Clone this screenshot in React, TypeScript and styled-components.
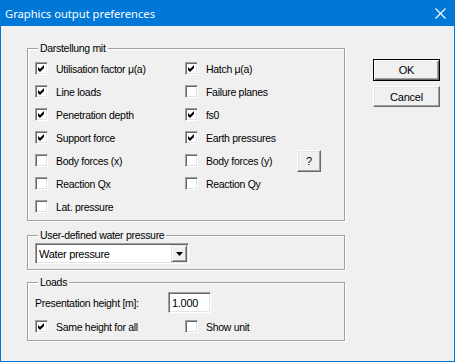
import React from "react";
import styled, { createGlobalStyle } from "styled-components";

const GlobalStyle = createGlobalStyle`
  html, body {
    margin: 0;
    padding: 0;
    background: #f0f0f0;
  }
  body {
    font-family: "Liberation Sans", Arial, sans-serif;
    font-size: 10.5px;
    letter-spacing: -0.3px;
    color: #000;
  }
`;

const Window = styled.div`
  width: 455px;
  height: 362px;
  box-sizing: border-box;
  border: 1px solid #0078d7;
  border-top: none;
  background: #f0f0f0;
  display: flex;
  flex-direction: column;
`;

const TitleBar = styled.div`
  height: 26px;
  margin: 0 -1px;
  background: #0078d7;
  color: #fff;
  display: flex;
  align-items: center;
  padding-left: 5px;
  font-family: "Noto Sans", "Liberation Sans", sans-serif;
  font-size: 11.2px;
  letter-spacing: 0;
`;

const Title = styled.div`
  flex: 1;
`;

const CloseBox = styled.div`
  width: 30px;
  height: 26px;
  display: flex;
  align-items: center;
  justify-content: center;
`;

const Body = styled.div`
  display: flex;
  padding: 22px 0 0 26px;
`;

const LeftColumn = styled.div`
  width: 318px;
  display: flex;
  flex-direction: column;
`;

const RightColumn = styled.div`
  display: flex;
  flex-direction: column;
  gap: 5px;
  padding: 11px 0 0 28px;
`;

const GroupBox = styled.div<{ $pad: string; $mt?: number }>`
  position: relative;
  box-sizing: border-box;
  border: 1px solid #a0a0a0;
  box-shadow: inset 1px 1px 0 #fff, 1px 1px 0 #fff;
  padding: ${p => p.$pad};
  margin-top: ${p => p.$mt ?? 0}px;
`;

const Legend = styled.span`
  position: absolute;
  top: -7px;
  left: 10px;
  padding: 0 2px;
  line-height: 13px;
  background: #f0f0f0;
`;

const CheckGrid = styled.div`
  display: grid;
  grid-template-columns: 150px 112px auto;
  grid-auto-rows: 23px;
  align-items: center;
`;

const Row = styled.label`
  display: flex;
  align-items: center;
  gap: 8px;
  white-space: nowrap;
`;

const Box = styled.span`
  position: relative;
  display: inline-block;
  flex: none;
  width: 13px;
  height: 13px;
  box-sizing: border-box;
  background: #fff;
  border: 1px solid;
  border-color: #a0a0a0 #fff #fff #a0a0a0;
  box-shadow: inset 1px 1px 0 #696969, inset -1px -1px 0 #e3e3e3;
  svg {
    position: absolute;
    left: -1px;
    top: -1px;
  }
`;

const Button = styled.button<{ $default?: boolean; $w: number; $h: number }>`
  width: ${p => p.$w}px;
  height: ${p => p.$h}px;
  padding: 0;
  box-sizing: border-box;
  background: #f0f0f0;
  font-family: "Liberation Sans", Arial, sans-serif;
  font-size: 11px;
  letter-spacing: -0.2px;
  color: #000;
  border: 1px solid;
  border-color: ${p => (p.$default ? "#000" : "#fff #696969 #696969 #fff")};
  box-shadow: ${p =>
    p.$default
      ? "inset 1px 1px 0 #fff, inset -1px -1px 0 #696969, inset -2px -2px 0 #a0a0a0"
      : "inset -1px -1px 0 #a0a0a0, inset 1px 1px 0 #e3e3e3"};
`;

const Sunken = styled.div<{ $w: number }>`
  width: ${p => p.$w}px;
  height: 21px;
  box-sizing: border-box;
  background: #fff;
  border: 1px solid;
  border-color: #a0a0a0 #fff #fff #a0a0a0;
  box-shadow: inset 1px 1px 0 #696969, inset -1px -1px 0 #e3e3e3;
  display: flex;
  align-items: center;
  padding: 0 1px 0 3px;
  font-size: 11px;
`;

const SelectText = styled.span`
  flex: 1;
`;

const ArrowButton = styled.span`
  width: 16px;
  height: 17px;
  box-sizing: border-box;
  background: #f0f0f0;
  border: 1px solid;
  border-color: #e3e3e3 #696969 #696969 #e3e3e3;
  box-shadow: inset 1px 1px 0 #fff, inset -1px -1px 0 #a0a0a0;
  display: flex;
  align-items: center;
  justify-content: center;
`;

const LoadsRow = styled.div`
  display: flex;
  align-items: center;
`;

const FieldLabel = styled.span`
  width: 133px;
`;

const LoadsChecks = styled.div`
  display: grid;
  grid-template-columns: 150px auto;
  margin-top: 7px;
`;

const Check = ({ checked }: { checked?: boolean }) => (
  <Box>
    {checked && (
      <svg width="13" height="13" viewBox="0 0 13 13">
        <polygon points="3,5 5,7 9,3 9,6 5,10 3,8" fill="#000" />
      </svg>
    )}
  </Box>
);

const options: [string, boolean, string, boolean][] = [
  ["Utilisation factor \u03bc(a)", true, "Hatch \u03bc(a)", true],
  ["Line loads", true, "Failure planes", false],
  ["Penetration depth", true, "fs0", true],
  ["Support force", true, "Earth pressures", true],
  ["Body forces (x)", false, "Body forces (y)", false],
  ["Reaction Qx", false, "Reaction Qy", false],
];

export default function App() {
  return (
    <>
      <GlobalStyle />
      <Window>
        <TitleBar>
          <Title>Graphics output preferences</Title>
          <CloseBox>
            <svg width="11" height="11" viewBox="0 0 11 11">
              <path d="M0.5 0.5 L10.5 10.5 M10.5 0.5 L0.5 10.5" stroke="#fff" strokeWidth="1.1" />
            </svg>
          </CloseBox>
        </TitleBar>
        <Body>
          <LeftColumn>
            <GroupBox $pad="8px 0 2px 7px">
              <Legend>Darstellung mit</Legend>
              <CheckGrid>
                {options.map(([a, ca, b, cb], i) => (
                  <React.Fragment key={a}>
                    <Row>
                      <Check checked={ca} />
                      {a}
                    </Row>
                    <Row>
                      <Check checked={cb} />
                      {b}
                    </Row>
                    <div>
                      {i === 4 && (
                        <Button $w={24} $h={22}>
                          ?
                        </Button>
                      )}
                    </div>
                  </React.Fragment>
                ))}
                <Row>
                  <Check />
                  Lat. pressure
                </Row>
              </CheckGrid>
            </GroupBox>

            <GroupBox $pad="7px 0 5px 7px" $mt={14}>
              <Legend>User-defined water pressure</Legend>
              <Sunken $w={154}>
                <SelectText>Water pressure</SelectText>
                <ArrowButton>
                  <svg width="7" height="4" viewBox="0 0 7 4">
                    <polygon points="0,0 7,0 3.5,4" fill="#000" />
                  </svg>
                </ArrowButton>
              </Sunken>
            </GroupBox>

            <GroupBox $pad="9px 0 7px 7px" $mt={12}>
              <Legend>Loads</Legend>
              <LoadsRow>
                <FieldLabel>Presentation height [m]:</FieldLabel>
                <Sunken $w={43}>1.000</Sunken>
              </LoadsRow>
              <LoadsChecks>
                <Row>
                  <Check checked />
                  Same height for all
                </Row>
                <Row>
                  <Check />
                  Show unit
                </Row>
              </LoadsChecks>
            </GroupBox>
          </LeftColumn>
          <RightColumn>
            <Button $default $w={67} $h={22}>
              OK
            </Button>
            <Button $w={67} $h={21}>
              Cancel
            </Button>
          </RightColumn>
        </Body>
      </Window>
    </>
  );
}
